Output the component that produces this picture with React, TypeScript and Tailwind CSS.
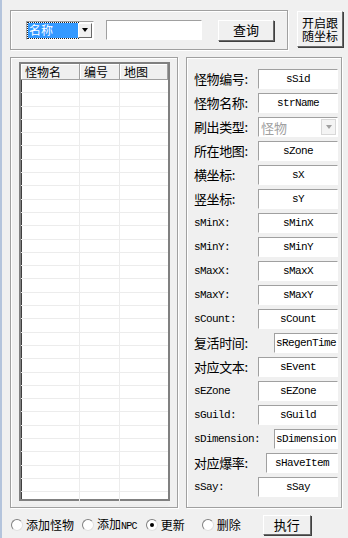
const cjk = "font-['SimSun','Noto_Sans_CJK_SC',sans-serif]";
const mono = "font-['Liberation_Mono','Noto_Sans_CJK_SC',monospace]";

type Field = { label: string; value: string; latin?: boolean; inputLeft?: number; combo?: boolean };

const fields: Field[] = [
  { label: "怪物编号:", value: "sSid" },
  { label: "怪物名称:", value: "strName" },
  { label: "刷出类型:", value: "怪物", combo: true },
  { label: "所在地图:", value: "sZone" },
  { label: "横坐标:", value: "sX" },
  { label: "竖坐标:", value: "sY" },
  { label: "sMinX:", value: "sMinX", latin: true },
  { label: "sMinY:", value: "sMinY", latin: true },
  { label: "sMaxX:", value: "sMaxX", latin: true },
  { label: "sMaxY:", value: "sMaxY", latin: true },
  { label: "sCount:", value: "sCount", latin: true },
  { label: "复活时间:", value: "sRegenTime", inputLeft: 88 },
  { label: "对应文本:", value: "sEvent" },
  { label: "sEZone", value: "sEZone", latin: true },
  { label: "sGuild:", value: "sGuild", latin: true },
  { label: "sDimension:", value: "sDimension", latin: true, inputLeft: 88 },
  { label: "对应爆率:", value: "sHaveItem", inputLeft: 80 },
  { label: "sSay:", value: "sSay", latin: true },
];

function Sunken({ className = "", children }: { className?: string; children?: React.ReactNode }) {
  return (
    <div
      className={`border-t border-l border-t-[#a0a0a0] border-l-[#a0a0a0] border-b border-r border-b-white border-r-white bg-white ${className}`}
    >
      {children}
    </div>
  );
}

function Button({ className = "", children }: { className?: string; children: React.ReactNode }) {
  return (
    <div
      className={`flex items-center justify-center border border-t-white border-l-white border-b-[#696969] border-r-[#696969] bg-[#f0f0f0] shadow-[1px_1px_0_#404040] text-[13px] text-black ${cjk} ${className}`}
    >
      {children}
    </div>
  );
}

function Radio({ checked, label }: { checked?: boolean; label: React.ReactNode }) {
  return (
    <div className="flex items-center gap-[3px]">
      <span className="flex h-[12px] w-[12px] items-center justify-center rounded-full border border-t-[#808080] border-l-[#808080] border-b-[#e0e0e0] border-r-[#e0e0e0] bg-white">
        {checked && <span className="h-[4px] w-[4px] rounded-full bg-black" />}
      </span>
      <span className={`text-[12px] leading-none text-black ${cjk}`}>{label}</span>
    </div>
  );
}

const group =
  "border border-[#a0a0a0] shadow-[inset_1px_1px_0_white,1px_1px_0_white]";

export default function App() {
  return (
    <div className={`h-[538px] w-[348px] overflow-hidden border-l-2 border-[#b4c4dc] bg-[#f0f0f0] ${cjk}`}>
      <div className="flex items-start pl-[8px] pt-[10px]">
        <div className={`flex h-[40px] w-[278px] items-center ${group}`}>
          <Sunken className="ml-[15px] flex h-[19px] w-[68px] items-center">
            <div className="ml-[1px] flex h-[15px] w-[50px] items-center bg-[#3399ff] px-[1px] text-[12px] leading-none text-white outline outline-1 outline-dotted outline-[#222]">
              名称
            </div>
            <div className="ml-auto mr-[1px] flex h-[15px] w-[14px] items-center justify-center border border-t-white border-l-white border-b-[#696969] border-r-[#696969] bg-[#f0f0f0]">
              <span className="h-0 w-0 border-x-[3.5px] border-t-[4px] border-x-transparent border-t-black" />
            </div>
          </Sunken>
          <Sunken className="ml-[12px] h-[20px] w-[96px]" />
          <Button className="ml-[16px] h-[21px] w-[56px]">查询</Button>
        </div>
        <Button className="ml-[9px] mt-[1px] h-[36px] w-[46px]">
          <span className="text-center text-[12px] leading-[13px]">
            开启跟
            <br />
            随坐标
          </span>
        </Button>
      </div>

      <div className="mt-[7px] flex pl-[8px]">
        <div className={`h-[451px] w-[168px] pl-[8px] pt-[4px] ${group}`}>
          <div className="h-[439px] w-[151px] border-2 border-[#808080] bg-white shadow-[inset_1px_1px_0_#404040]">
            <div className="flex h-[16px] text-[12px] leading-none">
              {[
                { t: "怪物名", w: "w-[59px]" },
                { t: "编号", w: "w-[40px]" },
                { t: "地图", w: "w-[48px]" },
              ].map((c) => (
                <div
                  key={c.t}
                  className={`${c.w} flex items-center border-r border-b border-r-[#a0a0a0] border-b-[#a0a0a0] bg-[#f0f0f0] pl-[4px] shadow-[inset_1px_1px_0_white]`}
                >
                  {c.t}
                </div>
              ))}
            </div>
            {Array.from({ length: 32 }).map((_, i) => (
              <div key={i} className="flex h-[13.3px] border-b border-[#ececec]">
                <div className="w-[59px] border-r border-[#ececec]" />
                <div className="w-[40px] border-r border-[#ececec]" />
                <div className="w-[48px]" />
              </div>
            ))}
          </div>
        </div>

        <div className={`ml-[8px] flex h-[451px] w-[156px] flex-col gap-[4px] pt-[11px] ${group}`}>
          {fields.map((f) => (
            <div key={f.label} className="relative flex h-[20px] items-center">
              <span
                className={`pl-[7px] text-black ${
                  f.latin ? `${mono} text-[11px] tracking-[-0.6px]` : "text-[13px] tracking-[-0.4px]"
                }`}
              >
                {f.label}
              </span>
              {f.combo ? (
                <Sunken className="absolute left-[71px] top-0 flex h-[20px] w-[80px] items-center bg-white">
                  <span className="pl-[2px] text-[13px] leading-none text-[#a0a0a0]">{f.value}</span>
                  <span className="ml-auto mr-[1px] flex h-[16px] w-[15px] items-center justify-center border border-[#d8d8d8] bg-[#f4f4f4]">
                    <span className="h-0 w-0 border-x-[3.5px] border-t-[4px] border-x-transparent border-t-[#a0a0a0]" />
                  </span>
                </Sunken>
              ) : (
                <Sunken
                  className={`absolute top-0 flex h-[20px] items-center justify-center ${
                    f.inputLeft === 88
                      ? "left-[87px] w-[64px]"
                      : f.inputLeft === 80
                        ? "left-[79px] w-[72px]"
                        : "left-[71px] w-[80px]"
                  }`}
                >
                  <span className={`${mono} text-[11px] tracking-[-0.6px] text-black`}>{f.value}</span>
                </Sunken>
              )}
            </div>
          ))}
        </div>
      </div>

      <div className="mt-[3px] flex h-[27px] items-center pl-[9px]">
        <Radio label="添加怪物" />
        <div className="ml-[8px]">
          <Radio
            label={
              <>
                添加<span className={`${mono} text-[10px] tracking-[-0.8px]`}>NPC</span>
              </>
            }
          />
        </div>
        <div className="ml-[9px]">
          <Radio checked label="更新" />
        </div>
        <div className="ml-[17px]">
          <Radio label="删除" />
        </div>
        <Button className="ml-[22px] h-[20px] w-[48px]">执行</Button>
      </div>
    </div>
  );
}
